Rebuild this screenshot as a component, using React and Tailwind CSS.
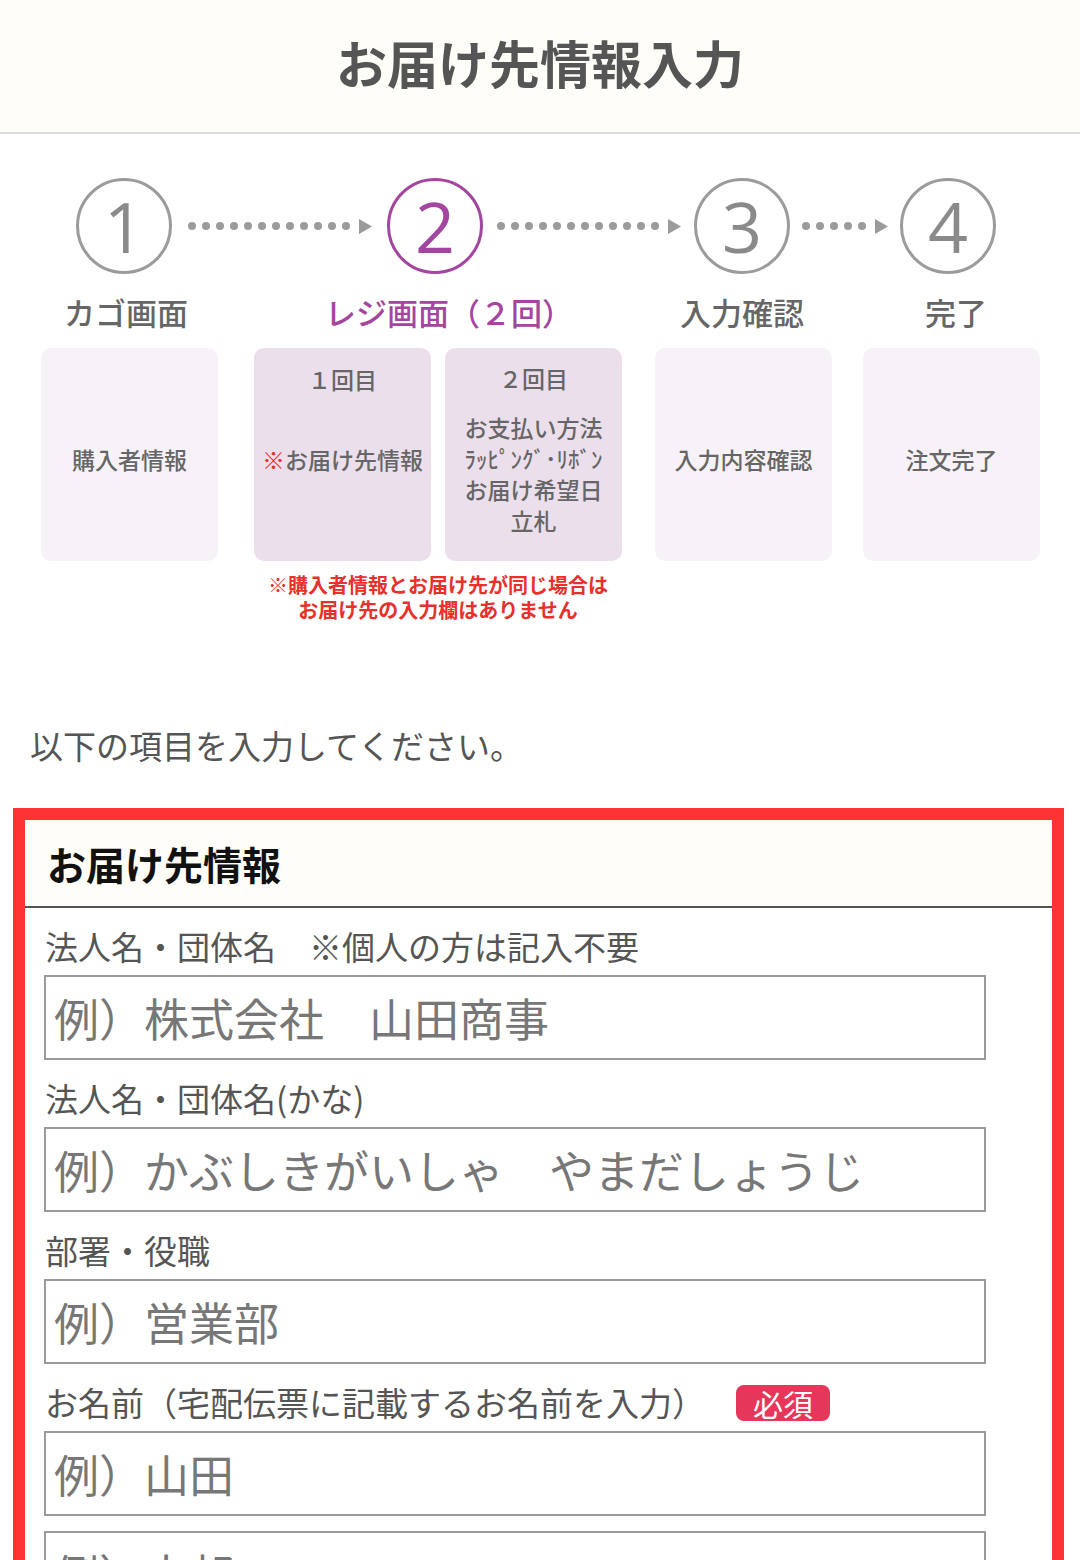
import React from "react";

const Dots = ({ count, width }) => (
  <div className={`flex h-[96px] items-center justify-center ${width}`}>
    <div className="flex items-center gap-[6px]">
      {Array.from({ length: count }).map((_, i) => (
        <span key={i} className="block h-[8px] w-[8px] rounded-full bg-[#9b9b9b]" />
      ))}
    </div>
    <svg className="ml-[9px]" width="13" height="15" viewBox="0 0 13 15">
      <path d="M0 0 L13 7.5 L0 15 Z" fill="#9b9b9b" />
    </svg>
  </div>
);

const Step = ({ num, label, active, shift = "" }) => (
  <div className="flex w-[96px] flex-col items-center">
    <div
      className={`flex h-[96px] w-[96px] items-center justify-center rounded-full border-[3px] ${
        active ? "border-[#a4469f] text-[#a4469f]" : "border-[#9b9b9b] text-[#8a8a8a]"
      }`}
    >
      <span className="font-['Open_Sans',sans-serif] text-[70px] font-normal leading-none">{num}</span>
    </div>
    <div
      className={`mt-[18px] whitespace-nowrap text-[31px] leading-[40px] font-medium ${shift} ${
        active ? "text-[#a4469f]" : "text-[#666]"
      }`}
    >
      {label}
    </div>
  </div>
);

const Card = ({ children }) => (
  <div className="flex h-[213px] w-[177px] items-center justify-center rounded-[10px] bg-[#f7f2f7] pt-[10px] text-center text-[23px] font-medium text-[#666]">
    {children}
  </div>
);

const Field = ({ label, placeholder, required, noLabel }) => (
  <div className={noLabel ? "pt-[15px]" : "pt-[19px]"}>
    {!noLabel && (
      <div className="mb-[8px] flex h-[40px] items-center pl-[1px] text-[33px] text-[#555]">
        <span>{label}</span>
        {required && (
          <span className="ml-[31px] rounded-[8px] bg-[#e6375a] px-[17px] text-[30px] leading-[36px] text-white">
            必須
          </span>
        )}
      </div>
    )}
    <input
      type="text"
      placeholder={placeholder}
      className="block h-[85px] w-[942px] border-2 border-[#9a9a9a] bg-white px-[8px] text-[45px] text-[#333] placeholder:text-[#777] outline-none"
    />
  </div>
);

export default function App() {
  return (
    <div className="min-h-[1560px] bg-white font-['Noto_Sans_CJK_JP','Noto_Sans',sans-serif]">
      <header className="flex h-[134px] items-center justify-center border-b-2 border-[#dcdcdc] bg-[#fefdf8] pb-[8px]">
        <h1 className="text-[51px] font-bold text-[#555]">お届け先情報入力</h1>
      </header>

      {/* progress steps */}
      <div className="mt-[44px] flex items-start pl-[76px]">
        <Step num="1" label="カゴ画面" shift="pl-[4px]" />
        <Dots count={12} width="w-[215px]" />
        <Step num="2" label="レジ画面（２回）" active shift="pl-[28px]" />
        <Dots count={12} width="w-[211px]" />
        <Step num="3" label="入力確認" />
        <Dots count={5} width="w-[110px]" />
        <Step num="4" label="完了" shift="pl-[16px]" />
      </div>

      <div className="mt-[16px] flex items-start pl-[41px]">
        <Card>購入者情報</Card>
        <div className="ml-[36px] flex flex-col items-center">
          <div className="flex gap-[14px]">
            <div className="flex h-[213px] w-[177px] flex-col items-center rounded-[10px] bg-[#ecdfec] pt-[15px] text-center text-[23px] font-medium text-[#666]">
              <div className="leading-[32px]">１回目</div>
              <div className="mt-[48px] leading-[32px]">
                <span className="text-[#e8302c]">※</span>お届け先情報
              </div>
            </div>
            <div className="flex h-[213px] w-[177px] flex-col items-center rounded-[10px] bg-[#ecdfec] pt-[14px] text-center text-[23px] font-medium text-[#666]">
              <div className="leading-[32px]">２回目</div>
              <div className="mt-[18px] leading-[31px]">
                お支払い方法
                <br />
                ﾗｯﾋﾟﾝｸﾞ･ﾘﾎﾞﾝ
                <br />
                お届け希望日
                <br />
                立札
              </div>
            </div>
          </div>
          <p className="mt-[11px] text-center text-[20px] font-bold leading-[25px] text-[#e8302c]">
            ※購入者情報とお届け先が同じ場合は
            <br />
            お届け先の入力欄はありません
          </p>
        </div>
        <div className="ml-[33px]">
          <Card>入力内容確認</Card>
        </div>
        <div className="ml-[31px]">
          <Card>注文完了</Card>
        </div>
      </div>

      <p className="mt-[99px] pl-[30px] text-[33px] leading-[48px] text-[#555]">以下の項目を入力してください。</p>

      <section className="ml-[13px] mr-[16px] mt-[39px] border-[12px] border-[#ff3333] pb-[40px]">
        <div className="flex h-[88px] items-center border-b-2 border-[#555] bg-[#fefdf8] pl-[22px]">
          <h2 className="text-[39px] font-bold text-[#111]">お届け先情報</h2>
        </div>
        <div className="pl-[19px]">
          <Field label="法人名・団体名　※個人の方は記入不要" placeholder="例）株式会社　山田商事" />
          <Field label="法人名・団体名(かな)" placeholder="例）かぶしきがいしゃ　やまだしょうじ" />
          <Field label="部署・役職" placeholder="例）営業部" />
          <Field label="お名前（宅配伝票に記載するお名前を入力）" placeholder="例）山田" required />
          <Field noLabel placeholder="例）太郎" />
        </div>
      </section>
    </div>
  );
}
